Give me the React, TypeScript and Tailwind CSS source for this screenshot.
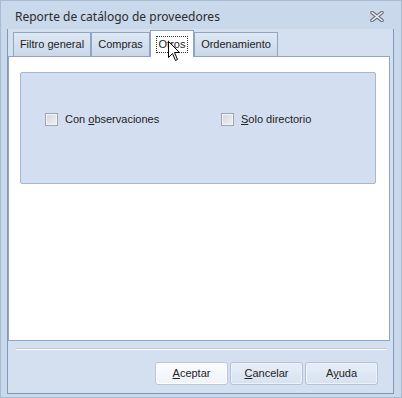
import React from "react";

const F = { fontFamily: '"Liberation Sans", Arial, sans-serif' };

function Check({ children }: { children: React.ReactNode }) {
  return (
    <div className="flex items-center gap-[7px]">
      <div className="w-[13px] h-[13px] border border-[#9aa6b8] bg-[#f4f4f4] p-[1px]">
        <div className="w-full h-full bg-gradient-to-br from-[#d6d8dc] to-[#eceef0]" />
      </div>
      <span className="text-[11px] text-[#222] leading-none">{children}</span>
    </div>
  );
}

function Btn({ children, focused }: { children: React.ReactNode; focused?: boolean }) {
  return (
    <div
      className={
        "w-[73px] h-[23px] rounded-[3px] border flex items-center justify-center text-[11px] text-[#222] " +
        (focused
          ? "border-[#b9c8db] bg-gradient-to-b from-[#fbfdff] to-[#eef3f9] shadow-[inset_0_0_0_1px_#ffffff]"
          : "border-[#b3c2d6] bg-gradient-to-b from-[#e6eef8] to-[#d7e2f0] shadow-[inset_0_0_0_1px_#eef3f9]")
      }
    >
      {children}
    </div>
  );
}

function Tab({ children, w, selected }: { children: React.ReactNode; w: string; selected?: boolean }) {
  return (
    <div
      className={
        "flex items-center justify-center text-[11px] text-[#222] border border-b-0 " +
        w +
        (selected
          ? " h-[27px] mb-[-1px] bg-white border-[#8ea5c4] relative z-10"
          : " h-[24px] bg-gradient-to-b from-[#dfe8f4] to-[#cad8ea] border-[#8ea5c4]")
      }
    >
      {children}
    </div>
  );
}

export default function App() {
  return (
    <div className="w-[402px] h-[398px] bg-[#c9d8ea] relative overflow-hidden" style={F}>
      <div className="absolute inset-0 border border-[#a9bbd3] pointer-events-none" />
      {/* title bar */}
      <div className="h-[29px] flex items-center pl-[15px] pr-[18px] pt-[4px]">
        <span className="text-[12px] text-[#2b2b2b]" style={{ fontFamily: '"Noto Sans", "Open Sans", sans-serif' }}>
          Reporte de catálogo de proveedores
        </span>
        <div className="flex-1" />
        <svg width="14" height="11" viewBox="0 0 14 11">
          <path d="M2 1.5 L12 9.5 M12 1.5 L2 9.5" stroke="#6b7280" strokeWidth="3.6" strokeLinecap="round" />
          <path d="M2 1.5 L12 9.5 M12 1.5 L2 9.5" stroke="#f3f4f6" strokeWidth="1.4" strokeLinecap="round" />
        </svg>
      </div>
      {/* client area */}
      <div className="ml-[7px] w-[387px] h-[365px] border-l border-r border-b border-[#7f98bc] bg-[#d4e0f0] flex flex-col">
        {/* tabs */}
        <div className="flex items-end pl-[5px] pt-[1px] h-[27px]">
          <Tab w="w-[78px]">Filtro general</Tab>
          <Tab w="w-[59px]">Compras</Tab>
          <Tab w="w-[44px]" selected>
            <span className="border border-dotted border-[#333] px-[2px] py-[2px] leading-none">
              Otros
            </span>
          </Tab>
          <Tab w="w-[84px]">Ordenamiento</Tab>
        </div>
        {/* panel */}
        <div className="w-[382px] h-[285px] border border-[#8ea5c4] bg-white pt-[15px] pl-[11px]">
          <div className="w-[356px] h-[112px] rounded-[2px] border border-[#a3b7d3] bg-[#d3dff0] flex items-center pl-[24px] pb-[17px]">
            <div className="w-[176px]">
              <Check>
                Con <u>o</u>bservaciones
              </Check>
            </div>
            <Check>
              <u>S</u>olo directorio
            </Check>
          </div>
        </div>
        {/* separator */}
        <div className="mt-[7px] ml-[8px] w-[370px] border-t border-t-[#c7c1d2] border-b border-b-white" />
        {/* buttons */}
        <div className="flex justify-end gap-[2px] pr-[15px] mt-[12px]">
          <Btn focused>
            <u>A</u>ceptar
          </Btn>
          <Btn>
            <u>C</u>ancelar
          </Btn>
          <Btn>
            A<u>y</u>uda
          </Btn>
        </div>
      </div>
      {/* mouse cursor */}
      <svg className="absolute left-[168px] top-[41px] z-20" width="13" height="21" viewBox="0 0 13 21">
        <path
          d="M0.5 0.5 L0.5 16.5 L4.5 12.5 L7.5 19.5 L9.5 18.5 L6.5 11.5 L11.5 11.5 Z"
          fill="#ffffff"
          stroke="#000000"
          strokeWidth="1"
          strokeLinejoin="miter"
        />
      </svg>
    </div>
  );
}
